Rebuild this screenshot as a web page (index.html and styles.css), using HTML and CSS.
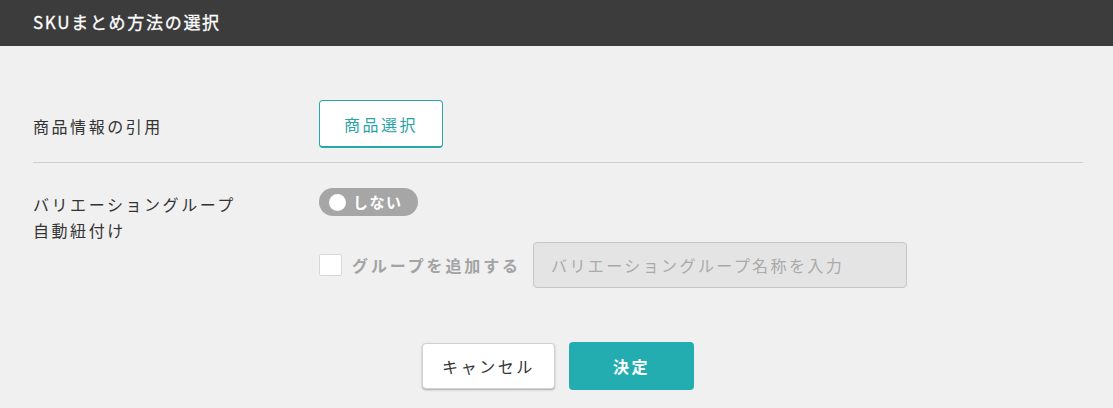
FILE: index.html
```html
<!DOCTYPE html>
<html lang="ja">
<head>
<meta charset="utf-8">
<title>SKUまとめ方法の選択</title>
<link rel="stylesheet" href="styles.css">
</head>
<body>
<div class="dialog">
  <header class="dialog-header">
    <h1 class="dialog-title">SKUまとめ方法の選択</h1>
  </header>
  <main class="dialog-body">
    <section class="form-row form-row--first">
      <div class="form-label">商品情報の引用</div>
      <div class="form-field">
        <button class="btn btn-outline" type="button">商品選択</button>
      </div>
    </section>
    <section class="form-row form-row--second">
      <div class="form-label form-label--multi">バリエーショングループ<br>自動紐付け</div>
      <div class="form-field form-field--stack">
        <div class="toggle">
          <span class="toggle-knob"></span>
          <span class="toggle-text">しない</span>
        </div>
        <div class="group-add">
          <label class="check">
            <span class="check-box"></span>
            <span class="check-text">グループを追加する</span>
          </label>
          <input class="text-input" type="text" placeholder="バリエーショングループ名称を入力" disabled>
        </div>
      </div>
    </section>
    <footer class="dialog-actions">
      <button class="btn btn-cancel" type="button">キャンセル</button>
      <button class="btn btn-primary" type="button">決定</button>
    </footer>
  </main>
</div>
</body>
</html>
```

FILE: styles.css
```css
* {
  box-sizing: border-box;
}

html, body {
  margin: 0;
  padding: 0;
  background: #f0f0f0;
}

body {
  font-family: "Noto Sans CJK JP", "Noto Sans", sans-serif;
  color: #333;
  width: 1113px;
  height: 408px;
  overflow: hidden;
}

.dialog-header {
  height: 46px;
  background: #3c3c3c;
  display: flex;
  align-items: center;
  padding-left: 33px;
}

.dialog-title {
  margin: 0;
  font-size: 17px;
  font-weight: 400;
  color: #fff;
  letter-spacing: 0.1em;
  line-height: 1;
  position: relative;
  top: -2px;
  -webkit-text-stroke: 0.3px #fff;
}

.dialog-body {
  padding: 0 30px 0 33px;
}

.form-row {
  display: flex;
}

.form-row--first {
  padding-top: 54px;
  padding-bottom: 14px;
  border-bottom: 1px solid #cfcfcf;
  align-items: center;
}

.form-row--second {
  padding-top: 25px;
}

.form-label {
  width: 286px;
  flex: none;
  font-size: 16px;
  letter-spacing: 0.16em;
  line-height: 26px;
  color: #333;
}

.form-row--first .form-label {
  margin-top: 4px;
}

.form-label--multi {
  margin-top: 3px;
}

.form-field--stack {
  display: flex;
  flex-direction: column;
  gap: 26px;
}

.btn {
  font-family: inherit;
  font-size: 16px;
  letter-spacing: 0.16em;
  border-radius: 4px;
  cursor: pointer;
  display: flex;
  align-items: center;
  justify-content: center;
  padding: 0;
}

.btn-outline {
  width: 124px;
  height: 48px;
  background: #fff;
  color: #2aa3a8;
  border: 1px solid #2aa7ab;
  border-bottom-width: 2px;
}

.toggle {
  width: 99px;
  height: 28px;
  border-radius: 14px;
  background: #a6a6a6;
  display: flex;
  align-items: center;
  padding-left: 10px;
  gap: 7px;
}

.toggle-knob {
  width: 17px;
  height: 17px;
  border-radius: 50%;
  background: #fff;
}

.toggle-text {
  color: #fff;
  font-size: 15px;
  font-weight: 700;
  letter-spacing: 0.1em;
  line-height: 1;
  position: relative;
  top: -1px;
}

.group-add {
  display: flex;
  align-items: center;
}

.check {
  display: flex;
  align-items: center;
  gap: 10px;
  width: 214px;
}

.check-box {
  width: 23px;
  height: 22px;
  background: #fff;
  border: 1px solid #d8d8d8;
  border-radius: 2px;
}

.check-text {
  font-size: 16px;
  font-weight: 700;
  color: #a3a3a3;
  letter-spacing: 0.18em;
}

.text-input {
  width: 374px;
  height: 46px;
  background: #e4e4e4;
  border: 1px solid #c6c6c6;
  border-radius: 4px;
  padding: 0 0 0 17px;
  font-family: inherit;
  font-size: 16px;
  letter-spacing: 0.15em;
  color: #aaa;
}

.text-input::placeholder {
  color: #aaa;
}

.dialog-actions {
  display: flex;
  justify-content: center;
  align-items: flex-start;
  gap: 14px;
  padding-top: 54px;
}

.btn-cancel {
  width: 133px;
  height: 46px;
  margin-top: 1px;
  background: #fff;
  color: #333;
  border: 1px solid #d2d2d2;
  box-shadow: 0 1px 2px rgba(0, 0, 0, 0.3);
}

.btn-primary {
  width: 125px;
  height: 48px;
  background: #23adb1;
  color: #fff;
  font-weight: 700;
  border: none;
}
```
